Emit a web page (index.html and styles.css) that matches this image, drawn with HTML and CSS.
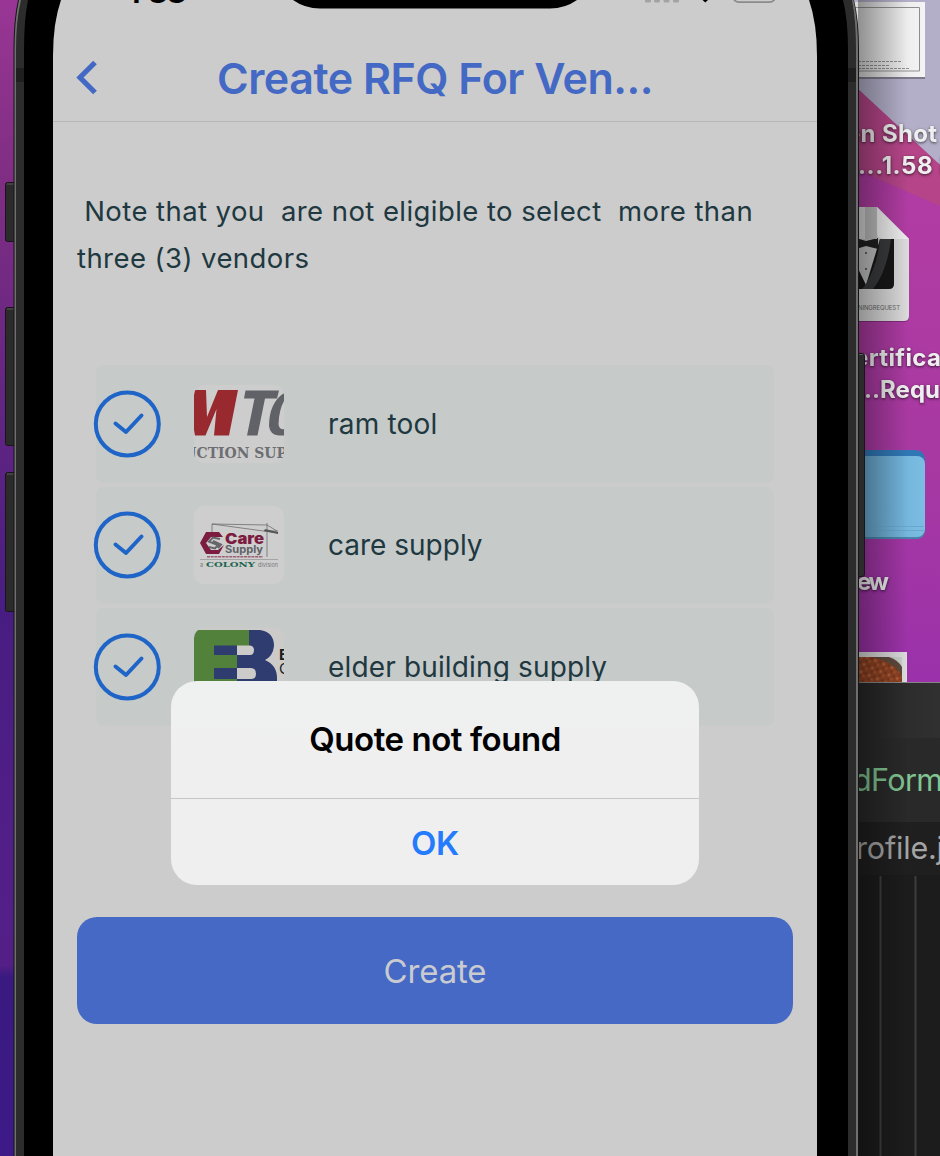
FILE: index.html
```html
<!DOCTYPE html>
<html lang="en">
<head>
<meta charset="utf-8">
<title>Create RFQ For Vendors</title>
<link rel="stylesheet" href="styles.css">
</head>
<body>
<main class="stage">
  <svg class="desktop" width="940" height="1156" viewBox="0 0 940 1156">
    <defs>
      <linearGradient id="wallLeft" x1="0" y1="0" x2="0" y2="1">
        <stop offset="0" stop-color="#993695"/><stop offset=".15" stop-color="#802e83"/><stop offset=".33" stop-color="#662683"/><stop offset=".53" stop-color="#481d82"/><stop offset=".75" stop-color="#521f88"/><stop offset=".835" stop-color="#531f87"/><stop offset=".845" stop-color="#391a80"/><stop offset="1" stop-color="#3d1a88"/>
      </linearGradient>
      <linearGradient id="wallRight" x1="0" y1="0" x2="0" y2="1">
        <stop offset="0" stop-color="#a437a0"/><stop offset=".3" stop-color="#b13ca3"/><stop offset=".65" stop-color="#a839a2"/><stop offset="1" stop-color="#9a31ab"/>
      </linearGradient>
      <linearGradient id="paper"><stop offset="0" stop-color="#cfcfcf"/><stop offset="1" stop-color="#f4f4f4"/></linearGradient>
      <linearGradient id="folder"><stop offset="0" stop-color="#5e9ec4"/><stop offset="1" stop-color="#7bbde3"/></linearGradient>
      <linearGradient id="editor"><stop offset="0" stop-color="#262626"/><stop offset="1" stop-color="#303030"/></linearGradient>
      <linearGradient id="shade"><stop offset="0" stop-color="#000" stop-opacity=".34"/><stop offset="1" stop-color="#000" stop-opacity="0"/></linearGradient>
      <pattern id="food" width="9" height="8" patternUnits="userSpaceOnUse" patternTransform="rotate(23)">
        <rect width="9" height="8" fill="#8f4324"/><circle cx="2" cy="2" r="1.500" fill="#b9623a"/><circle cx="6" cy="5" r="1.600" fill="#a9522c"/><circle cx="7" cy="1.500" r="1" fill="#6e3118"/><circle cx="3" cy="6" r="1" fill="#753619"/>
      </pattern>
    </defs>
    <rect width="60" height="1156" fill="url(#wallLeft)"/>
    <rect x="820" width="120" height="700" fill="url(#wallRight)"/>
    <path d="M840 0H940V165L858 89H840Z" fill="#b3afc9"/>
    <path d="M850 82L940 165V206L858 170Z" fill="#b54588"/>

    <rect x="830" y="3" width="95" height="76" fill="#000" opacity=".3"/>
    <rect x="830" y="2" width="95" height="75" fill="url(#paper)"/>
    <path d="M840 7.500H919.500V71H840" fill="none" stroke="#8e8e8e"/>
    <path d="M858 61.500H902M858 65.500H890M858 68.500H910" stroke="#777" stroke-width=".8" stroke-dasharray="3 1"/>

    <path d="M840 208H877L909 240V317q0 5-5 5H840Z" fill="#000" opacity=".25"/>
    <path d="M840 207H877L909 239V316q0 5-5 5H840Z" fill="#dadada"/>
    <path d="M840 239H894V284q0 5-5 5H840Z" fill="#171717"/>
    <path d="M850 239H880L866 285L850 252Z" fill="#c5c5c5"/>
    <path d="M880 239H891Q887 272 873 289H862L866 284Q878 263 880 239Z" fill="#393a3c"/>
    <path d="M856 238L866 241L878 238V249L866 246L856 249Z" fill="#202020"/>
    <circle cx="866" cy="253" r="1" fill="#444"/><circle cx="866" cy="269" r="1" fill="#444"/>
    <path d="M877 207L909 239H884Q877 239 877 231Z" fill="#ededed"/>
    <path d="M865 207H877V239H865Z" fill="#bdbdbd"/>
    <text class="file-tag" x="858" y="310" textLength="42">NINGREQUEST</text>

    <path d="M840 450H914q11 0 11 11V530H840Z" fill="#2f77b5"/>
    <rect x="840" y="456" width="85" height="83" rx="8" fill="#4a83a9"/>
    <rect x="840" y="456" width="85" height="81" rx="8" fill="url(#folder)"/>
    <path d="M858 526.500H924M858 530.500H924" stroke="#68a8cf"/>

    <rect x="840" y="652" width="67" height="40" fill="#dcdcdc"/>
    <rect x="840" y="657" width="62" height="40" fill="url(#food)"/>
    <path d="M872 657Q894 662 902 676V657Z" fill="#5f4a3c"/><path d="M889 657H902V667Q898 660 889 657Z" fill="#c9cfcb"/>

    <g class="file-label">
      <text x="846" y="142" textLength="91">en Shot</text>
      <text x="858" y="174" textLength="97">...1.58 P</text>
      <text x="854" y="366" textLength="87">ertifica</text>
      <text x="864" y="398" textLength="76">..Requ</text>
      <text x="857" y="590" textLength="32">ew</text>
    </g>

    <rect x="840" y="682" width="100" height="474" fill="#1c1c1c"/>
    <rect x="840" y="682" width="100" height="140" fill="url(#editor)"/>
    <rect x="840" y="738" width="100" height="84" fill="#292929"/>
    <path d="M840 682.500H940" stroke="#858585"/>
    <rect x="840" y="822" width="100" height="53" fill="#1f1f1f"/>
    <path d="M880.500 876V1156M915.500 876V1156" stroke="#3d3d3d" stroke-width="2"/>
    <text class="code code-green" x="853" y="791" textLength="90">dForm</text>
    <text class="code code-gray" x="856" y="859" textLength="88">rofile.j</text>
    <rect x="858" width="50" height="1156" fill="url(#shade)"/>

    <g fill="#2b2b2b" stroke="#1a151c">
      <rect x="5.500" y="182.500" width="14" height="59" rx="2"/>
      <rect x="5.500" y="307.500" width="14" height="138" rx="2"/>
      <rect x="5.500" y="472.500" width="14" height="139" rx="2"/>
      <rect x="850" y="353.500" width="14.500" height="223" rx="2"/>
    </g>
    <path d="M7 184H14M7 309H14M7 474H14M858 354.500H863" stroke="#5a5a5a"/>
    <path d="M18 0Q13.500 20 13.500 50V1156H859V50Q859 20 854 0Z" fill="#151515"/>
    <path d="M19 0Q14.500 20 14.500 50V1156H858V50Q858 20 853.500 0Z" fill="#6f6f6f"/>
    <path d="M21 0Q16 20 16 50V1156H856V50Q856 20 852 0Z" fill="#2c2c2c"/>
    <path d="M16 68H24V82H16ZM848 68H856V82H848Z" fill="#1f1f1f"/>
    <path d="M28 0Q24 20 24 50V1156H848V50Q848 20 843 0Z" fill="#000"/>
    <path d="M61 0Q53 23 53 56V1156H817V56Q817 23 809 0Z" fill="#cccccc"/>
    <path d="M293 0Q305 8.500 320 8.500H550Q565 8.500 577 0Z" fill="#000"/>
    <text class="clock" x="127" y="2.500" textLength="60">1:33</text>
    <g fill="#a3a3a3"><rect x="645" y="-3" width="6" height="5.500" rx="1.500"/><rect x="654" y="-3" width="6" height="5.500" rx="1.500"/><rect x="663.500" y="-3" width="6" height="5.500" rx="1.500"/><rect x="673" y="-3" width="6" height="5.500" rx="1.500"/></g>
    <path d="M701.500 -1H709L705.300 2.600Z"/>
    <rect x="733" y="-18" width="42.500" height="20.200" rx="6" fill="none" stroke="#8a8a8a" stroke-width="1.700"/>
  </svg>

  <section class="screen">
    <header class="bar">
      <svg class="back" width="24" height="36" viewBox="0 0 24 36"><path d="M20 2.500L5 17.500L20 32.500" fill="none" stroke="#4469c5" stroke-width="5.200"/></svg>
      <h1 class="title">Create RFQ For Ven...</h1>
    </header>
    <p class="note"><span class="line line-a"> Note that you  are not eligible to select  more than</span><span class="line line-b">three (3) vendors</span></p>
    <ul class="vendors">
      <li class="vendor">
        <svg class="check" width="68" height="68" viewBox="0 0 68 68"><circle cx="34.300" cy="34" r="31.500"/><path d="M22.500 33.500L33 42L48.500 25.500"/></svg>
        <svg class="logo" width="90" height="78" viewBox="0 0 90 78">
          <rect width="90" height="78" fill="#cecdcd"/>
          <path d="M0 5H12L13 32L24 5H44L35 50.500H20L22.500 24L11.500 50.500H1L0 45Z" fill="#982a2f"/>
          <path d="M51.500 5.500H85L83 13.500H71L63.500 50.500H53L60.500 13.500H50Z" fill="#616267"/>
          <path d="M90 8Q75 18 75 41Q76 50 85 50.500H90V44Q85 45 84.500 39Q85 25 90 16Z" fill="#616267"/>
          <text x="-4" y="72.500" class="logo-slab" textLength="97" lengthAdjust="spacingAndGlyphs">JCTION SUP</text>
        </svg>
        <span class="name name-ram">ram tool</span>
      </li>
      <li class="vendor">
        <svg class="check" width="68" height="68" viewBox="0 0 68 68"><circle cx="34.300" cy="34" r="31.500"/><path d="M22.500 33.500L33 42L48.500 25.500"/></svg>
        <svg class="logo" width="90" height="78" viewBox="0 0 90 78">
          <rect width="90" height="78" fill="#cecece"/>
          <path d="M18 18L84 27M18 18L73 19M73 17V51M18 18V27M73 19L83 25M70 25H84" fill="none" stroke="#6d6d6d" stroke-width=".8"/>
          <path d="M71 23L84 26V28L70 25Z" fill="#555"/>
          <path d="M12 26H25L29 31H17L12 37L17 44H24L30 39L25 48H12L6 37Z" fill="#7b1c40"/>
          <path d="M26 33L19 31.500L15 35.500L24 39L21 42.500L15 41M19 35L27 38.500L24 42" fill="none" stroke="#66666a" stroke-width="2"/>
          <text x="31" y="38" class="care" textLength="39" lengthAdjust="spacingAndGlyphs">Care</text>
          <text x="31" y="47" class="supply" textLength="38" lengthAdjust="spacingAndGlyphs">Supply</text>
          <path d="M13 50.800H69" stroke="#9c6175" stroke-width="1.500" stroke-dasharray="3 .7"/>
          <path d="M6 53.500H84" stroke="#999" stroke-width=".8"/>
          <text x="6" y="60.500" class="tiny" textLength="3.500">a</text>
          <text x="12" y="60.700" class="colony" textLength="49" lengthAdjust="spacingAndGlyphs">COLONY</text>
          <text x="64" y="60.500" class="tiny" textLength="20">division</text>
        </svg>
        <span class="name name-care">care supply</span>
      </li>
      <li class="vendor">
        <svg class="check" width="68" height="68" viewBox="0 0 68 68"><circle cx="34.300" cy="34" r="31.500"/><path d="M22.500 33.500L33 42L48.500 25.500"/></svg>
        <svg class="logo" width="90" height="78" viewBox="0 0 90 78">
          <rect width="90" height="78" fill="#cdcbc9"/>
          <path d="M0 78V6Q0 2 4 2H56V78Z" fill="#51813a"/>
          <path d="M55 2H66Q80 4 80 18Q79 28 71 32Q83 37 83 50V78H43V27H55Z" fill="#2e3c70"/>
          <path d="M20 17.500H43V27H20ZM20 40H43V51H20Z" fill="#2e3c70"/>
          <path d="M43 17.500H56Q60 18 60 22Q60 27 56 27H43ZM43 40H57Q62 40 62 46Q62 51 57 51H43Z" fill="#cdcbc9"/>
          <text x="85" y="32" class="elder">E</text><text x="85" y="46" class="elder elder-thin">C</text>
        </svg>
        <span class="name name-elder">elder building supply</span>
      </li>
    </ul>
    <button class="create">Create</button>
    <div class="alert">
      <div class="alert-title"><span>Quote not found</span></div>
      <div class="alert-action"><span>OK</span></div>
    </div>
  </section>
</main>
</body>
</html>
```
FILE: styles.css
```css
* { box-sizing: border-box; }
body { margin: 0; font-family: Inter, "Liberation Sans", sans-serif; }
.stage { position: relative; width: 940px; height: 1156px; overflow: hidden; background: #000; }
.desktop { position: absolute; inset: 0; display: block; }
.desktop text { white-space: pre; }
.file-label { font-size: 24px; font-weight: 700; fill: #efefef; filter: drop-shadow(0 1.5px 1.5px rgba(0,0,0,.65)); }
.file-tag { font-size: 6px; fill: #666; }
.code { font-size: 30.5px; }
.code-green { fill: #80c592; }
.code-gray { fill: #a5a5a5; }
.clock { font-size: 33px; font-weight: 600; fill: #000; }

.screen { position: absolute; left: 53px; top: 0; width: 764px; height: 1156px; display: flex; flex-direction: column; color: #203840; }
.bar { display: flex; align-items: center; height: 122px; padding: 34px 23px 0 22px; border-bottom: 1px solid #b6b6b6; }
.back { flex: none; }
.title { flex: 1; margin: 0 44px 0 21px; text-align: center; font-size: 43px; line-height: 52px; font-weight: 600; letter-spacing: -.5px; color: #4469c5; white-space: nowrap; }
.note { margin: 66px 0 0 24px; font-size: 27.5px; line-height: 47px; }
.line { display: block; white-space: pre; letter-spacing: .43px; }
.line-a { margin-left: -1px; }
.vendors { list-style: none; margin: 83px 43px 0; padding: 0; display: flex; flex-direction: column; gap: 4px; }
.vendor { display: flex; align-items: center; height: 117.500px; border-radius: 8px; background: #c6cac9; }
.check { flex: none; margin-left: -3px; fill: none; stroke: #1f65c8; stroke-width: 4; stroke-linecap: round; stroke-linejoin: round; }
.logo { flex: none; margin: 0 44px 0 33px; border-radius: 10px; overflow: hidden; }
.logo-slab { font: bold 14px "DejaVu Serif", serif; fill: #6d6e71; }
.care { font: 900 15px Inter, sans-serif; fill: #7b1c40; }
.supply { font: 700 10px Inter, sans-serif; fill: #616166; }
.colony { font: 900 8px "DejaVu Serif", serif; fill: #1c674f; }
.tiny { font: 5.500px Inter, sans-serif; fill: #777; }
.elder { font: 700 15px Inter, sans-serif; fill: #1c1c1c; }
.elder-thin { font-weight: 400; }
.name { font-size: 28px; line-height: 40px; white-space: nowrap; }
.name-ram { letter-spacing: .2px; }
.name-elder { letter-spacing: .15px; }
.create { margin: 191.500px 24px 0; padding-top: 2px; height: 107px; border: 0; border-radius: 20px; background: #4569c5; color: #c9cbd1; font: 400 33px Inter, sans-serif; letter-spacing: -.15px; }
.alert { position: absolute; left: 118px; top: 681px; width: 528px; height: 203.500px; border-radius: 26px; background: linear-gradient(#eff1f0, #efefef 35%); display: flex; flex-direction: column; text-align: center; white-space: nowrap; }
.alert-title { height: 118px; padding-top: 37px; border-bottom: 1px solid #c5c6c6; font-size: 33px; line-height: 42px; font-weight: 600; letter-spacing: -.45px; color: #000; }
.alert-action { padding-top: 23px; font-size: 33px; line-height: 42px; font-weight: 600; letter-spacing: -.4px; color: #247bfb; }
```
